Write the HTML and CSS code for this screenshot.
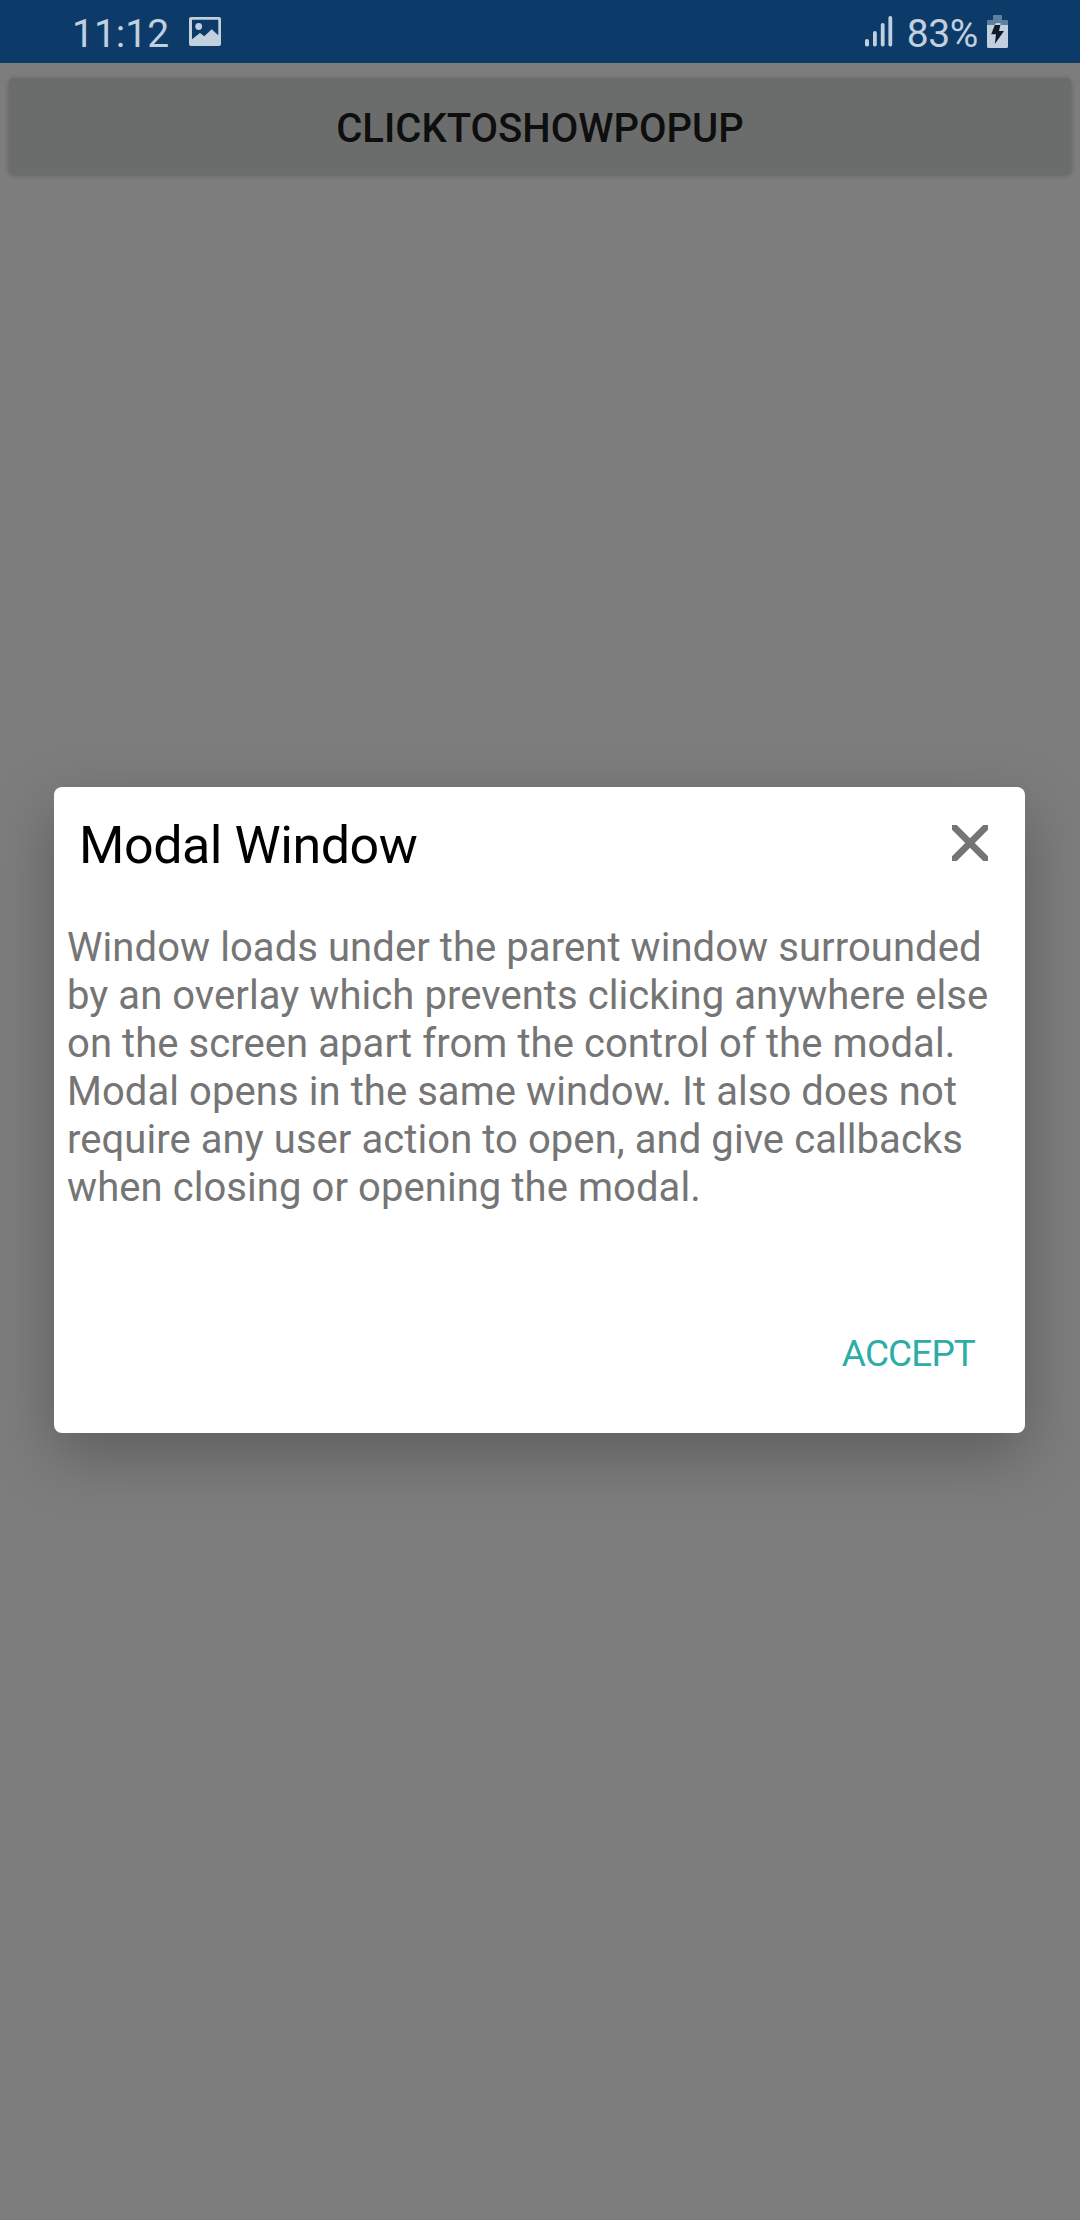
FILE: index.html
```html
<!DOCTYPE html>
<html lang="en">
<head>
<meta charset="utf-8">
<title>Modal Window</title>
<link rel="stylesheet" href="styles.css">
</head>
<body>
<div class="screen">
  <header class="status-bar">
    <div class="status-left">
      <span class="clock">11:12</span>
      <svg class="icon-picture" width="32" height="29" viewBox="0 0 32 29">
        <path fill="#c1cfde" fill-rule="evenodd" d="M2 0H30A2 2 0 0 1 32 2V27A2 2 0 0 1 30 29H2A2 2 0 0 1 0 27V2A2 2 0 0 1 2 0ZM3 2.7V22.3L11 16L15.3 19.3L22.7 12.2L29.3 18.3V2.7Z"/>
        <circle cx="9.7" cy="9.5" r="3.4" fill="#c1cfde"/>
      </svg>
    </div>
    <div class="status-right">
      <svg class="icon-signal" width="28" height="31" viewBox="0 0 28 31">
        <g fill="#c1cfde">
          <rect x="0" y="23" width="4" height="7.5" rx="1.8"/>
          <rect x="8" y="15" width="3.8" height="15.5" rx="1.8"/>
          <rect x="15.8" y="7" width="3.8" height="23.5" rx="1.8"/>
          <rect x="23.4" y="0" width="3.8" height="30.5" rx="1.8"/>
        </g>
      </svg>
      <span class="battery-level">83%</span>
      <svg class="icon-battery" width="21" height="33" viewBox="0 0 21 33">
        <path fill="#5f7f9f" d="M7 0H14A1 1 0 0 1 15 1V5H20A1 1 0 0 1 21 6V10H0V6A1 1 0 0 1 1 5H6V1A1 1 0 0 1 7 0Z"/>
        <path fill="#c1cfde" d="M0 10H7.5L9 8H13.5V10H21V31.5A1.5 1.5 0 0 1 19.5 33H1.5A1.5 1.5 0 0 1 0 31.5Z"/>
        <path fill="#0f1b28" d="M7.8 10H13.4L12 16H17L7.8 29L9 19.3H4.2Z"/>
      </svg>
    </div>
  </header>
  <main class="page">
    <button class="popup-button">CLICKTOSHOWPOPUP</button>
  </main>
  <section class="modal">
    <div class="modal-header">
      <h1 class="modal-title">Modal Window</h1>
      <svg class="icon-close" width="36" height="36" viewBox="0 0 36 36">
        <path d="M-4 -4L40 40M40 -4L-4 40" stroke="#757575" stroke-width="6.8"/>
      </svg>
    </div>
    <p class="modal-text">Window loads under the parent window surrounded<br>by an overlay which prevents clicking anywhere else<br>on the screen apart from the control of the modal.<br>Modal opens in the same window. It also does not<br>require any user action to open, and give callbacks<br>when closing or opening the modal.</p>
    <div class="modal-actions"><span class="accept">ACCEPT</span></div>
  </section>
</div>
</body>
</html>
```
FILE: styles.css
```css
body {
  margin: 0;
  font-family: Roboto, sans-serif;
}
.screen {
  box-sizing: border-box;
  width: 1080px;
  height: 2220px;
  background: #7d7d7d;
  overflow: hidden;
}
.status-bar {
  display: flex;
  justify-content: space-between;
  box-sizing: border-box;
  height: 63px;
  padding: 0 72px;
  background: #0c3a69;
  color: #c1cfde;
  font-size: 39px;
  line-height: 68px;
}
.status-left,
.status-right {
  display: flex;
  align-items: flex-start;
}
.icon-picture {
  margin: 17px 0 0 20px;
}
.icon-signal {
  margin: 16px 14px 0 0;
}
.battery-level {
  letter-spacing: -0.4px;
}
.icon-battery {
  margin: 15px 0 0 9px;
}
.page {
  height: 724px;
  padding: 15px 9px 0;
  box-sizing: border-box;
}
.popup-button {
  display: block;
  width: 1062px;
  height: 96px;
  padding: 6px 0 0;
  border: 0;
  border-radius: 5px;
  background: #6b6d6c;
  box-shadow: 0 1px 5px rgba(0, 0, 0, 0.25);
  color: #0e0e0e;
  font: 500 40px/46px Roboto, sans-serif;
}
.modal {
  box-sizing: border-box;
  width: 971px;
  height: 646px;
  margin-left: 54px;
  padding: 28px 13px 0;
  border-radius: 8px;
  background: #fff;
  box-shadow: 0 22px 64px rgba(0, 0, 0, 0.26);
}
.modal-header {
  display: flex;
  justify-content: space-between;
  height: 109px;
  padding: 0 24px 0 12px;
}
.modal-title {
  margin: 0;
  color: #000;
  font-size: 52px;
  font-weight: 400;
  letter-spacing: -0.45px;
  line-height: 62px;
}
.icon-close {
  margin-top: 10px;
}
.modal-text {
  margin: 0;
  color: #757575;
  font-size: 40px;
  letter-spacing: 0.07px;
  line-height: 48px;
  white-space: nowrap;
}
.modal-actions {
  display: flex;
  justify-content: flex-end;
  padding: 120px 37px 0 0;
}
.accept {
  color: #2dada7;
  font-size: 37px;
  letter-spacing: -0.9px;
  line-height: 44px;
}
```
